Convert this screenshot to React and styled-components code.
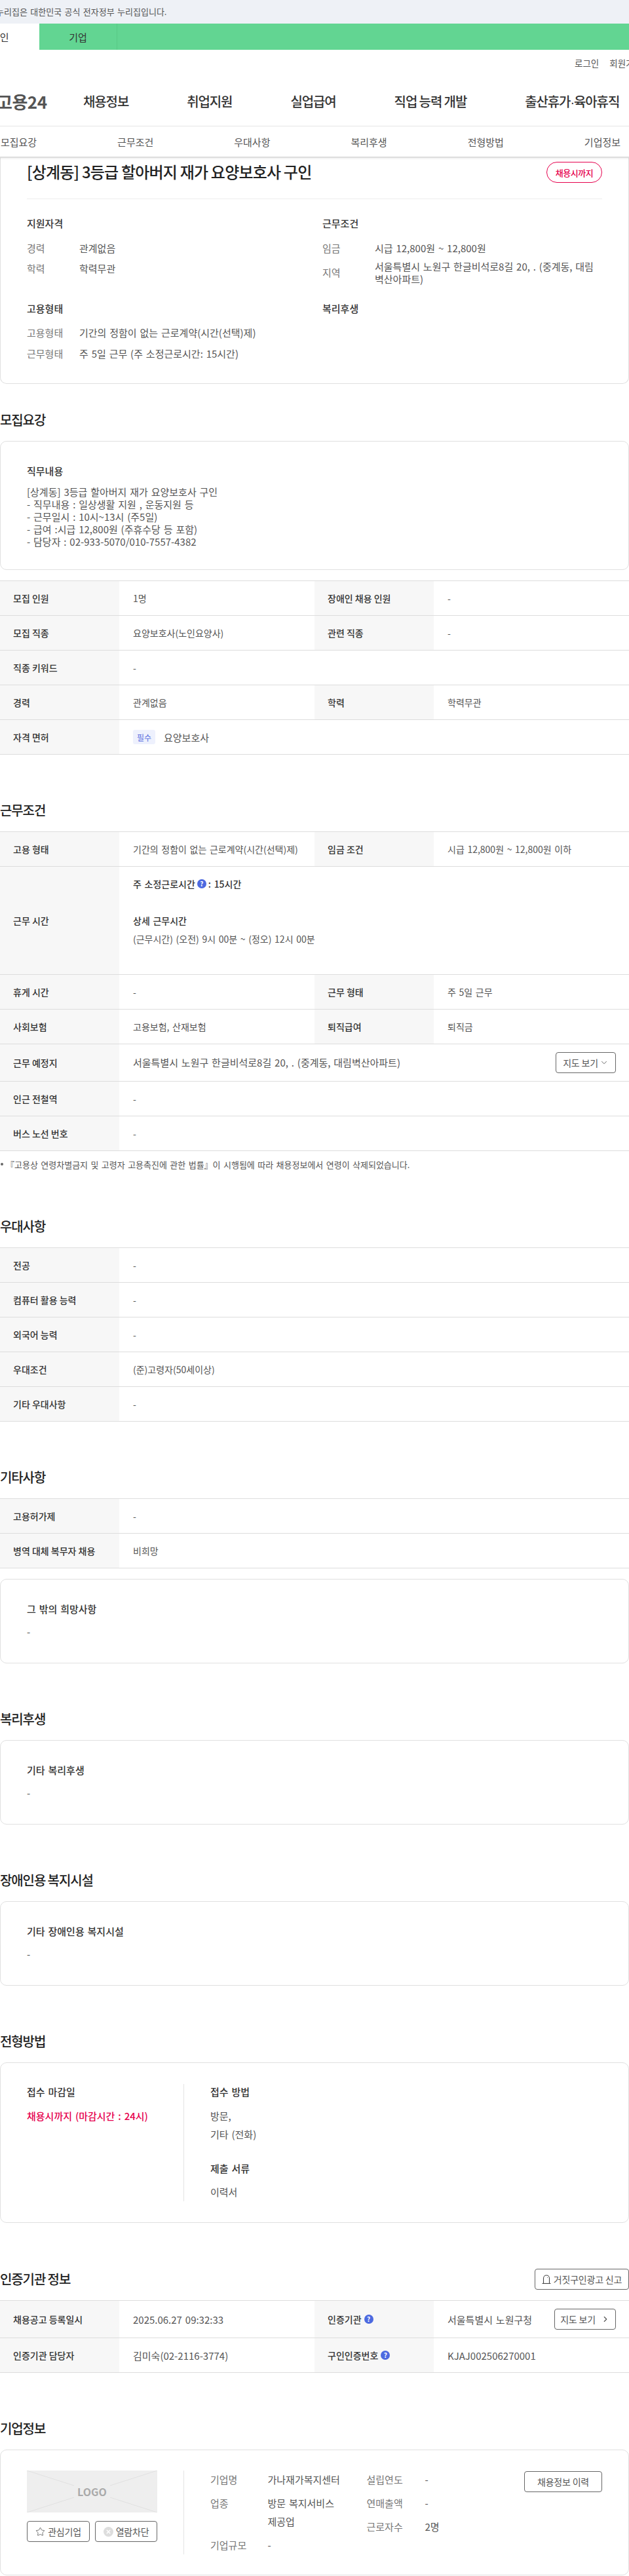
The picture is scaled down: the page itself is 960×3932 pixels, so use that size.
import React from "react";
import styled, { createGlobalStyle } from "styled-components";
import { ChevronDown, ChevronRight, Star } from "lucide-react";

const GlobalStyle = createGlobalStyle`
	* {
		box-sizing: border-box;
	}
	body {
		margin: 0;
		background: #fff;
		color: #222;
		font-family: "Noto Sans CJK KR", "Noto Sans", sans-serif;
		font-size: 15px;
		word-spacing: 1.5px;
	}
`;

const Page = styled.div`
	width: 960px;
	overflow: hidden;
`;

const Banner = styled.div`
	height: 36px;
	background: #eef1f6;
	color: #555;
	font-size: 13px;
	line-height: 36px;
	white-space: nowrap;
	text-indent: -6px;
`;

const GnbBar = styled.div`
	display: flex;
	height: 40px;
	background: #62d592;
	font-size: 15px;
`;

const GnbTab = styled.div`
	display: flex;
	align-items: center;
	justify-content: ${props => (props.$active ? "flex-start" : "center")};
	width: ${props => (props.$active ? "60px" : "119px")};
	background: ${props => (props.$active ? "#fff" : "transparent")};
	border-right: ${props => (props.$active ? "none" : "1px solid #58c986")};
	color: #333;
`;

const GnbClipped = styled.span`
	margin-left: -14px;
	white-space: nowrap;
`;

const UtilBar = styled.div`
	display: flex;
	gap: 16px;
	height: 40px;
	padding-left: 877px;
	align-items: center;
	color: #555;
	font-size: 13.5px;
	white-space: nowrap;
`;

const MainNav = styled.nav`
	display: flex;
	align-items: center;
	height: 77px;
	border-bottom: 1px solid #e8e8e8;
	white-space: nowrap;
	word-spacing: 0;
`;

const Logo = styled.div`
	width: 132px;
	margin-left: -5px;
	flex: none;
	color: #555;
	font-size: 26px;
	font-weight: 700;
	letter-spacing: -0.5px;
`;

const NavItem = styled.a`
	margin-right: 89px;
	color: #333;
	font-size: 20px;
	font-weight: 500;
	letter-spacing: -1.1px;
	flex: none;
`;

const NavDot = styled.span`
	font-family: "Liberation Sans", sans-serif;
`;

const SubNav = styled.div`
	position: relative;
	z-index: 2;
	display: flex;
	height: 48px;
	width: 1070px;
	margin-left: -60.6px;
	padding-top: 1px;
	background: #fff;
	border-bottom: 2px solid #ddd;
	box-shadow: 0 1px 3px rgba(0, 0, 0, 0.08);
`;

const SubNavItem = styled.a`
	display: flex;
	align-items: center;
	justify-content: center;
	width: 178.2px;
	flex: none;
	color: #555;
	font-size: 15px;
`;

const Card = styled.div`
	border: 1px solid #e0e0e0;
	border-radius: 10px;
	padding: ${props => props.$padding || "33px 40px 35px"};
	margin-top: ${props => props.$top || "0"};
	margin-bottom: ${props => props.$gap || "0"};
`;

const SummaryCard = styled(Card)`
	border-top: none;
	border-radius: 0 0 10px 10px;
	padding: 6px 40px 33px;
`;

const TitleRow = styled.div`
	display: flex;
	align-items: center;
	justify-content: space-between;
	padding-bottom: 24px;
	border-bottom: 1px solid #eee;
`;

const JobTitle = styled.h1`
	margin: 0 0 2px;
	color: #222;
	font-size: 24px;
	font-weight: 500;
	line-height: 30px;
	letter-spacing: -0.8px;
	word-spacing: 0;
`;

const Badge = styled.span`
	display: flex;
	align-items: center;
	justify-content: center;
	width: 85px;
	height: 32px;
	border: 1px solid #e6004d;
	border-radius: 16px;
	color: #e6004d;
	font-size: 13px;
	font-weight: 500;
	letter-spacing: -0.5px;
`;

const SummaryGrid = styled.div`
	display: grid;
	grid-template-columns: 451px 427px;
	row-gap: 24px;
	padding-top: 25px;
`;

const BlockTitle = styled.h3`
	margin: 0;
	color: #333;
	font-size: 15px;
	font-weight: 500;
	line-height: 24px;
`;

const SummaryRows = styled.div`
	display: flex;
	flex-direction: column;
	gap: 5.5px;
	margin-top: 12px;
`;

const SummaryRow = styled.div`
	display: flex;
	align-items: center;
	min-height: 26px;
`;

const SummaryKey = styled.span`
	width: 80px;
	flex: none;
	color: #777;
	font-size: 15px;
`;

const SummaryValue = styled.span`
	max-width: 340px;
	color: #555;
	font-size: 15px;
	line-height: 19px;
`;

const Section = styled.section`
	margin-top: ${props => props.$top || "70px"};
`;

const HeadingRow = styled.div`
	display: flex;
	align-items: center;
	justify-content: space-between;
	margin-bottom: 16px;
`;

const Heading = styled.h2`
	margin: 0 0 17px;
	color: #222;
	font-size: 20px;
	font-weight: 500;
	line-height: 30px;
	letter-spacing: -1.1px;
	word-spacing: 0;

	${HeadingRow} & {
		margin-bottom: 0;
	}
`;

const CardLabel = styled.h3`
	margin: 0 0 ${props => props.$gap || "11px"};
	color: #333;
	font-size: 15px;
	font-weight: 500;
	line-height: 24px;
`;

const CardText = styled.div`
	color: #555;
	font-size: 15px;
	line-height: ${props => props.$line || "24px"};
	white-space: pre-line;
`;

const Table = styled.div`
	border-top: 1px solid #ddd;
`;

const Row = styled.div`
	display: grid;
	grid-template-columns: 182px 298px 182px 298px;
	min-height: ${props => props.$height || "53px"};
	border-bottom: 1px solid #ddd;
`;

const Label = styled.div`
	display: flex;
	align-items: center;
	gap: 4px;
	padding-left: 20px;
	background: #f7f7f7;
	color: #333;
	font-size: 14px;
	font-weight: 500;
	word-spacing: 0;
`;

const Value = styled.div`
	display: flex;
	align-items: center;
	justify-content: space-between;
	padding: 0 20px 0 21px;
	color: #555;
	font-size: ${props => props.$size || "14px"};
	grid-column: ${props => (props.$wide ? "span 3" : "auto")};
	white-space: nowrap;
`;

const WorkHours = styled.div`
	grid-column: span 3;
	padding: 12px 21px;
	color: #555;
	font-size: 14px;
	line-height: 28px;
`;

const WorkLine = styled.div`
	display: flex;
	align-items: center;
	gap: 3px;
	height: 28px;
	color: #333;
	font-weight: 500;
	margin-bottom: ${props => (props.$gap ? "28px" : "0")};
`;

const Help = styled.span`
	display: inline-flex;
	align-items: center;
	justify-content: center;
	width: 14px;
	height: 14px;
	border-radius: 50%;
	background: #4d6ae0;
	color: #fff;
	font-size: 10px;
	font-weight: 700;
	line-height: 1;
	flex: none;
`;

const RequiredTag = styled.span`
	display: inline-flex;
	align-items: center;
	justify-content: center;
	width: 34px;
	height: 22px;
	margin-right: 13px;
	border-radius: 3px;
	background: #eef1fd;
	color: #5a6fe0;
	font-size: 12px;
`;

const Inline = styled.span`
	display: flex;
	align-items: center;
`;

const Button = styled.button`
	display: inline-flex;
	align-items: center;
	justify-content: center;
	gap: ${props => props.$gap || "4px"};
	width: ${props => props.$width};
	height: 32px;
	padding: 0;
	border: 1px solid #666;
	border-radius: 4px;
	background: #fff;
	color: #555;
	font-family: inherit;
	font-size: 14px;
	letter-spacing: -0.2px;
	word-spacing: 0;
	flex: none;
`;

const Note = styled.p`
	display: flex;
	align-items: center;
	margin: 10px 0 2px;
	height: 20px;
	padding-left: 1px;
	color: #555;
	font-size: 13px;
	white-space: nowrap;

	&::before {
		content: "";
		width: 4px;
		height: 4px;
		margin-right: 4px;
		border-radius: 50%;
		background: #666;
	}
`;

const SplitBody = styled.div`
	display: flex;
`;

const SplitSide = styled.div`
	width: 240px;
	padding-right: 40px;
	border-right: 1px solid #e4e4e4;
	flex: none;
`;

const SplitMain = styled.div`
	display: flex;
	flex: 1;
	padding-left: 40px;
`;

const Deadline = styled.div`
	color: #e6004d;
	font-size: 15px;
	font-weight: 500;
	line-height: 28px;
`;

const MethodText = styled(CardText)`
	line-height: 28px;
	margin-bottom: ${props => props.$gap || "0"};
`;

const LogoBox = styled.div`
	position: relative;
	display: flex;
	align-items: center;
	justify-content: center;
	height: 64px;
	margin-bottom: 13px;
	background: #eee;
	color: #aaa;
	font-size: 16px;
	font-weight: 700;
`;

const LogoLines = styled.svg`
	position: absolute;
	inset: 0;
	width: 100%;
	height: 100%;
`;

const LogoText = styled.span`
	position: relative;
`;

const SideButtons = styled.div`
	display: flex;
	justify-content: space-between;
`;

const InfoColumn = styled.dl`
	display: flex;
	flex-direction: column;
	gap: 8px;
	width: ${props => props.$width};
	margin: 0;
`;

const InfoRow = styled.div`
	display: flex;
	line-height: 28px;
	font-size: 15px;
`;

const InfoKey = styled.dt`
	width: ${props => props.$width};
	flex: none;
	color: #777;
`;

const InfoValue = styled.dd`
	margin: 0;
	color: #555;
	word-break: keep-all;
`;

const HistoryButton = styled(Button)`
	margin: 1px 0 0 auto;
`;

const CompanyCard = styled(Card)`
	padding: 31px 40px 31px;
`;

const navItems = [
	"채용정보",
	"취업지원",
	"실업급여",
	"직업 능력 개발",
	<>
		출산휴가<NavDot>·</NavDot>육아휴직
	</>
];
const subNavItems = ["모집요강", "근무조건", "우대사항", "복리후생", "전형방법", "기업정보"];

const DoubleRow = ({ a, b, c, d, height }) => (
	<Row $height={height}>
		<Label>{a}</Label>
		<Value>{b}</Value>
		<Label>{c}</Label>
		<Value>{d}</Value>
	</Row>
);

const WideRow = ({ label, children, height, size }) => (
	<Row $height={height}>
		<Label>{label}</Label>
		<Value $wide $size={size}>
			{children}
		</Value>
	</Row>
);

const TextCard = ({ label, top }) => (
	<Card $top={top}>
		<CardLabel>{label}</CardLabel>
		<CardText>-</CardText>
	</Card>
);

const BellIcon = () => (
	<svg width="14" height="16" viewBox="0 0 14 16" fill="none" stroke="#444" strokeWidth="1.1">
		<path d="M2.5 14V6.5a4.5 4.5 0 0 1 9 0V14" />
		<path d="M0.5 14.5h13" />
		<circle cx="8.5" cy="5.5" r="0.5" fill="#444" stroke="none" />
	</svg>
);

const BlockIcon = () => (
	<svg width="15" height="15" viewBox="0 0 15 15">
		<circle cx="7.5" cy="7.5" r="7.5" fill="#ddd" />
		<path d="M4.8 4.8l5.4 5.4M10.2 4.8l-5.4 5.4" stroke="#fff" strokeWidth="1.4" />
	</svg>
);

const App = () => (
	<Page>
		<GlobalStyle />
		<Banner>누리집은 대한민국 공식 전자정부 누리집입니다.</Banner>
		<GnbBar>
			<GnbTab $active>
				<GnbClipped>개인</GnbClipped>
			</GnbTab>
			<GnbTab>기업</GnbTab>
		</GnbBar>
		<UtilBar>
			<span>로그인</span>
			<span>회원가입</span>
		</UtilBar>
		<MainNav>
			<Logo>고용24</Logo>
			{navItems.map((item, i) => (
				<NavItem key={i}>{item}</NavItem>
			))}
		</MainNav>
		<SubNav>
			{subNavItems.map(item => (
				<SubNavItem key={item}>{item}</SubNavItem>
			))}
		</SubNav>

		<SummaryCard>
			<TitleRow>
				<JobTitle>[상계동] 3등급 할아버지 재가 요양보호사 구인</JobTitle>
				<Badge>채용시까지</Badge>
			</TitleRow>
			<SummaryGrid>
				<div>
					<BlockTitle>지원자격</BlockTitle>
					<SummaryRows>
						<SummaryRow>
							<SummaryKey>경력</SummaryKey>
							<SummaryValue>관계없음</SummaryValue>
						</SummaryRow>
						<SummaryRow>
							<SummaryKey>학력</SummaryKey>
							<SummaryValue>학력무관</SummaryValue>
						</SummaryRow>
					</SummaryRows>
				</div>
				<div>
					<BlockTitle>근무조건</BlockTitle>
					<SummaryRows>
						<SummaryRow>
							<SummaryKey>임금</SummaryKey>
							<SummaryValue>시급 12,800원 ~ 12,800원</SummaryValue>
						</SummaryRow>
						<SummaryRow>
							<SummaryKey>지역</SummaryKey>
							<SummaryValue>서울특별시 노원구 한글비석로8길 20, . (중계동, 대림벽산아파트)</SummaryValue>
						</SummaryRow>
					</SummaryRows>
				</div>
				<div>
					<BlockTitle>고용형태</BlockTitle>
					<SummaryRows>
						<SummaryRow>
							<SummaryKey>고용형태</SummaryKey>
							<SummaryValue>기간의 정함이 없는 근로계약(시간(선택)제)</SummaryValue>
						</SummaryRow>
						<SummaryRow>
							<SummaryKey>근무형태</SummaryKey>
							<SummaryValue>주 5일 근무 (주 소정근로시간: 15시간)</SummaryValue>
						</SummaryRow>
					</SummaryRows>
				</div>
				<div>
					<BlockTitle>복리후생</BlockTitle>
				</div>
			</SummaryGrid>
		</SummaryCard>

		<Section $top="40px">
			<Heading>모집요강</Heading>
			<Card $gap="16px" $padding="33px 40px 33px">
				<CardLabel $gap="10px">직무내용</CardLabel>
				<CardText $line="19px">{`[상계동] 3등급 할아버지 재가 요양보호사 구인
- 직무내용 : 일상생활 지원 , 운동지원 등
- 근무일시 : 10시~13시 (주5일)
- 급여 :시급 12,800원 (주휴수당 등 포함)
- 담당자 : 02-933-5070/010-7557-4382`}</CardText>
			</Card>
			<Table>
				<DoubleRow a="모집 인원" b="1명" c="장애인 채용 인원" d="-" />
				<DoubleRow a="모집 직종" b="요양보호사(노인요양사)" c="관련 직종" d="-" />
				<WideRow label="직종 키워드">-</WideRow>
				<DoubleRow a="경력" b="관계없음" c="학력" d="학력무관" />
				<WideRow label="자격 면허" size="15px">
					<Inline>
						<RequiredTag>필수</RequiredTag>
						요양보호사
					</Inline>
				</WideRow>
			</Table>
		</Section>

		<Section>
			<Heading>근무조건</Heading>
			<Table>
				<DoubleRow
					a="고용 형태"
					b="기간의 정함이 없는 근로계약(시간(선택)제)"
					c="임금 조건"
					d="시급 12,800원 ~ 12,800원 이하"
				/>
				<Row $height="164.5px">
					<Label>근무 시간</Label>
					<WorkHours>
						<WorkLine $gap>
							주 소정근로시간 <Help>?</Help>: 15시간
						</WorkLine>
						<WorkLine>상세 근무시간</WorkLine>
						<div>(근무시간) (오전) 9시 00분 ~ (정오) 12시 00분</div>
					</WorkHours>
				</Row>
				<DoubleRow a="휴게 시간" b="-" c="근무 형태" d="주 5일 근무" />
				<DoubleRow a="사회보험" b="고용보험, 산재보험" c="퇴직급여" d="퇴직금" />
				<WideRow label="근무 예정지" height="57.5px" size="15px">
					서울특별시 노원구 한글비석로8길 20, . (중계동, 대림벽산아파트)
					<Button $width="92px" $gap="2px">
						지도 보기 <ChevronDown size={14} strokeWidth={1.5} />
					</Button>
				</WideRow>
				<WideRow label="인근 전철역">-</WideRow>
				<WideRow label="버스 노선 번호">-</WideRow>
			</Table>
			<Note>『고용상 연령차별금지 및 고령자 고용촉진에 관한 법률』이 시행됨에 따라 채용정보에서 연령이 삭제되었습니다.</Note>
		</Section>

		<Section>
			<Heading>우대사항</Heading>
			<Table>
				<WideRow label="전공">-</WideRow>
				<WideRow label="컴퓨터 활용 능력">-</WideRow>
				<WideRow label="외국어 능력">-</WideRow>
				<WideRow label="우대조건">(준)고령자(50세이상)</WideRow>
				<WideRow label="기타 우대사항">-</WideRow>
			</Table>
		</Section>

		<Section>
			<Heading>기타사항</Heading>
			<Table>
				<WideRow label="고용허가제">-</WideRow>
				<WideRow label="병역 대체 복무자 채용">비희망</WideRow>
			</Table>
			<TextCard label="그 밖의 희망사항" top="16px" />
		</Section>

		<Section>
			<Heading>복리후생</Heading>
			<TextCard label="기타 복리후생" />
		</Section>

		<Section>
			<Heading>장애인용 복지시설</Heading>
			<TextCard label="기타 장애인용 복지시설" />
		</Section>

		<Section>
			<Heading>전형방법</Heading>
			<Card $padding="32px 40px">
				<SplitBody>
					<SplitSide>
						<CardLabel>접수 마감일</CardLabel>
						<Deadline>채용시까지 (마감시간 : 24시)</Deadline>
					</SplitSide>
					<SplitMain>
						<div>
							<CardLabel>접수 방법</CardLabel>
							<MethodText $gap="26px">{`방문,
기타 (전화)`}</MethodText>
							<CardLabel $gap="10px">제출 서류</CardLabel>
							<MethodText>이력서</MethodText>
						</div>
					</SplitMain>
				</SplitBody>
			</Card>
		</Section>

		<Section>
			<HeadingRow>
				<Heading>인증기관 정보</Heading>
				<Button $width="144px">
					<BellIcon /> 거짓구인광고 신고
				</Button>
			</HeadingRow>
			<Table>
				<Row $height="57px">
					<Label>채용공고 등록일시</Label>
					<Value $size="15px">2025.06.27 09:32:33</Value>
					<Label>
						인증기관 <Help>?</Help>
					</Label>
					<Value $size="15px">
						서울특별시 노원구청
						<Button $width="94px" $gap="8px">
							지도 보기 <ChevronRight size={14} strokeWidth={2} />
						</Button>
					</Value>
				</Row>
				<Row>
					<Label>인증기관 담당자</Label>
					<Value $size="15px">김미숙(02-2116-3774)</Value>
					<Label>
						구인인증번호 <Help>?</Help>
					</Label>
					<Value $size="15px">KJAJ002506270001</Value>
				</Row>
			</Table>
		</Section>

		<Section>
			<Heading>기업정보</Heading>
			<CompanyCard>
				<SplitBody>
					<SplitSide>
						<LogoBox>
							<LogoLines viewBox="0 0 199 64" preserveAspectRatio="none" stroke="#e0e0e0" strokeWidth="1" fill="none">
								<path d="M0 0L72 23M127 23L199 0M0 64L72 41M127 41L199 64" />
							</LogoLines>
							<LogoText>LOGO</LogoText>
						</LogoBox>
						<SideButtons>
							<Button $width="96px">
								<Star size={15} strokeWidth={1.3} /> 관심기업
							</Button>
							<Button $width="95px">
								<BlockIcon /> 열람차단
							</Button>
						</SideButtons>
					</SplitSide>
					<SplitMain>
						<InfoColumn $width="238.5px">
							<InfoRow>
								<InfoKey $width="87.5px">기업명</InfoKey>
								<InfoValue>가나재가복지센터</InfoValue>
							</InfoRow>
							<InfoRow>
								<InfoKey $width="87.5px">업종</InfoKey>
								<InfoValue>
									방문 복지서비스
									<br />
									제공업
								</InfoValue>
							</InfoRow>
							<InfoRow>
								<InfoKey $width="87.5px">기업규모</InfoKey>
								<InfoValue>-</InfoValue>
							</InfoRow>
						</InfoColumn>
						<InfoColumn $width="150px">
							<InfoRow>
								<InfoKey $width="89px">설립연도</InfoKey>
								<InfoValue>-</InfoValue>
							</InfoRow>
							<InfoRow>
								<InfoKey $width="89px">연매출액</InfoKey>
								<InfoValue>-</InfoValue>
							</InfoRow>
							<InfoRow>
								<InfoKey $width="89px">근로자수</InfoKey>
								<InfoValue>2명</InfoValue>
							</InfoRow>
						</InfoColumn>
						<HistoryButton $width="119px">채용정보 이력</HistoryButton>
					</SplitMain>
				</SplitBody>
			</CompanyCard>
		</Section>
	</Page>
);

export default App;
